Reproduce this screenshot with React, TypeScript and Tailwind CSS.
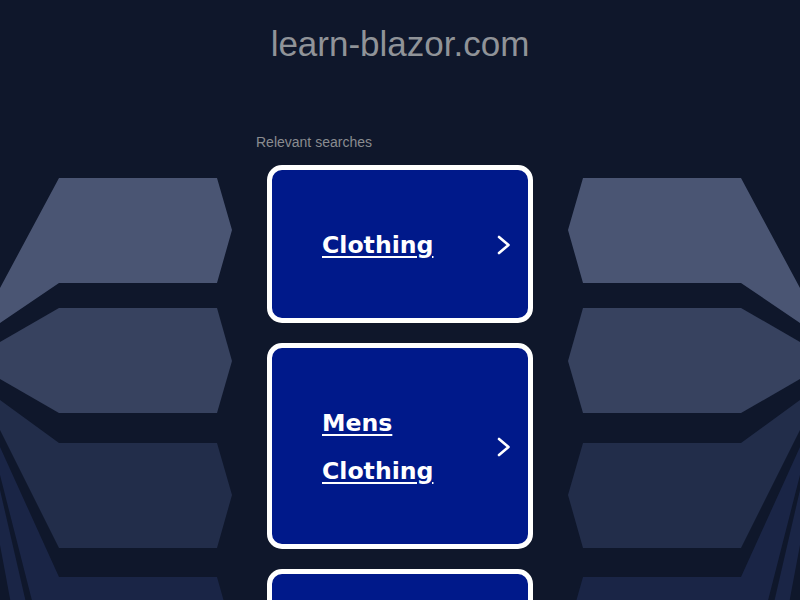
const searches = ['Clothing', 'Mens Clothing', 'Womens Clothing'];

function Backdrop() {
  const shapes = (
    <>
      <polygon fill="#4a5573" points="59,178 217,178 232,230 217,283 59,283 0,323 0,288" />
      <polygon fill="#37425f" points="0,342 59,308 217,308 232,361 217,413 59,413 0,379" />
      <polygon fill="#222d4a" points="0,400 59,443 217,443 232,495 217,548 59,548 0,430" />
      <polygon fill="#1a2546" points="0,447 59,577 217,577 232,630 217,683 53,683 0,475" />
      <polygon fill="#1a2546" points="0,490 30,620 14,620 0,545" />
    </>
  );

  return (
    <svg className="absolute inset-0" width="800" height="600" viewBox="0 0 800 600">
      {shapes}
      <g transform="translate(800,0) scale(-1,1)">{shapes}</g>
    </svg>
  );
}

function Chevron() {
  return (
    <svg width="14" height="20" viewBox="0 0 14 20" className="shrink-0">
      <polyline
        points="2,2 11.5,10 2,18"
        fill="none"
        stroke="white"
        strokeWidth="2.6"
        strokeLinecap="round"
        strokeLinejoin="round"
      />
    </svg>
  );
}

function SearchCard({ label }: { label: string }) {
  return (
    <a
      href="#"
      className="flex items-center w-[266px] rounded-[15px] border-[5px] border-white bg-[#00198a] pt-[51px] pb-[49px] pl-[50px] pr-[17px]"
    >
      <span className="flex-1 font-['DejaVu_Sans',sans-serif] text-[23.6px] font-bold leading-[48px] text-white underline underline-offset-[3px]">
        {label}
      </span>
      <Chevron />
    </a>
  );
}

export default function App() {
  return (
    <div className="relative h-[600px] overflow-hidden bg-[#0f172b] font-['Liberation_Sans',Arial,sans-serif]">
      <Backdrop />

      <div className="relative flex flex-col items-center">
        <h1 className="pt-[24px] text-[35px] leading-[40px] text-[#909398]">learn-blazor.com</h1>

        <div className="mt-[70px] w-[288px]">
          <p className="text-[14px] leading-[16px] text-[#8a8c90]">Relevant searches</p>
          <div className="mt-[15px] flex flex-col items-center gap-[20px]">
            {searches.map((s) => (
              <SearchCard key={s} label={s} />
            ))}
          </div>
        </div>
      </div>
    </div>
  );
}
